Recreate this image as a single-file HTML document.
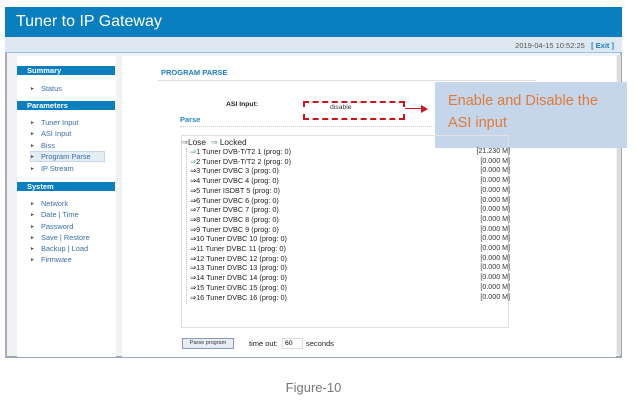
<!DOCTYPE html>
<html><head><meta charset="utf-8"><style>
*{margin:0;padding:0;box-sizing:border-box}
body{width:637px;height:401px;background:#fff;font-family:"Liberation Sans",sans-serif;position:relative;overflow:hidden}
.a{position:absolute}
.hd{left:5px;top:7px;width:617px;height:30px;background:#0a7fc0;color:#fff;font-size:16px;padding:6px 0 0 11px}
.tb{left:5px;top:37px;width:617px;height:16px;background:#dde8f2;border-bottom:1px solid #9cc3e0;font-size:7.5px;color:#555;text-align:right;padding:4px 8px 0 0}
.tb b{color:#1a7cc0}
.ct{left:5px;top:53px;width:617px;height:305px;background:#f0f2f4;border-bottom:2px solid #9aa8b8;border-left:2px solid #aab;border-right:2px solid #9aa}
.sb{left:17px;top:56px;width:99px;height:301px;background:#fff}
.sh{left:17px;width:98px;height:9px;background:#0a7fc0;color:#fff;font-size:7.5px;font-weight:bold;padding:0 0 0 10px;line-height:9px}
.it{left:30px;font-size:7.4px;color:#3a6ea8;line-height:9px}
.it:before{content:"►";color:#555;font-size:5px;margin-right:6px;vertical-align:1px}
.mn{left:122px;top:56px;width:494px;height:301px;background:#fff}
.r{left:190px;font-size:7.3px;color:#222;line-height:9.7px;white-space:nowrap}
.r i{font-style:normal;color:#5a8}
.v{left:460px;width:50px;text-align:right;font-size:7.1px;color:#333}
</style></head><body>
<div class="a hd">Tuner to IP Gateway</div>
<div class="a tb">2019-04-15 10:52:25 &nbsp;&nbsp;<b>[ Exit ]</b></div>
<div class="a ct"></div>
<div class="a" style="left:617px;top:55px;width:4px;height:300px;background:#ddd"></div>
<div class="a sb"></div>
<div class="a sh" style="top:66px">Summary</div>
<div class="a it" style="top:84px">Status</div>
<div class="a sh" style="top:101px">Parameters</div>
<div class="a it" style="top:118px">Tuner Input</div>
<div class="a it" style="top:129px">ASI Input</div>
<div class="a it" style="top:141px">Biss</div>
<div class="a" style="left:30px;top:151px;width:75px;height:11px;background:#e4ecf6;border:1px solid #c8d6e8"></div>
<div class="a it" style="top:152px">Program Parse</div>
<div class="a it" style="top:164px">IP Stream</div>
<div class="a sh" style="top:182px">System</div>
<div class="a it" style="top:199px">Network</div>
<div class="a it" style="top:210px">Date | Time</div>
<div class="a it" style="top:222px">Password</div>
<div class="a it" style="top:233px">Save | Restore</div>
<div class="a it" style="top:244px">Backup | Load</div>
<div class="a it" style="top:255px">Firmware</div>
<div class="a mn"></div>
<div class="a" style="left:161px;top:68px;font-size:7.5px;font-weight:bold;color:#1a7cc0">PROGRAM PARSE</div>
<div class="a" style="left:158px;top:80px;width:378px;height:1px;background:#ddd"></div>
<div class="a" style="left:226px;top:101px;font-size:6.8px;font-weight:bold;color:#222">ASI Input:</div>
<div class="a" style="left:303px;top:101px;width:102px;height:19px;border:2px dashed #d0121b"></div>
<div class="a" style="left:330px;top:104px;font-size:6.8px;color:#333">disable</div>
<div class="a" style="left:405px;top:108px;width:17px;height:1px;background:#d0121b"></div>
<div class="a" style="left:421px;top:105px;width:0;height:0;border-left:7px solid #d0121b;border-top:4px solid transparent;border-bottom:4px solid transparent"></div>
<div class="a" style="left:435px;top:82px;width:192px;height:66px;background:#c5d6ea;color:#e07a3a;font-size:14.5px;line-height:22px;padding:8px 0 0 13px;white-space:nowrap">Enable and Disable the<br>ASI input</div>
<div class="a" style="left:180px;top:115px;font-size:7.5px;font-weight:bold;color:#2a8ad0">Parse</div>
<div class="a" style="left:180px;top:126px;width:254px;border-top:1px dotted #ccc"></div>
<div class="a" style="left:181px;top:135px;width:328px;height:193px;border:1px solid #e0e0e0"></div>
<div class="a" style="left:181px;top:137px;font-size:8.3px;color:#222"><span style="color:#888">⇒</span>Lose &nbsp;<span style="color:#8a8">⇒</span> Locked</div>
<div class="a" style="left:186px;top:148px;width:1px;height:156px;border-left:1px dotted #bbb"></div>
<div class="a r" style="top:147px"><i>⇒</i>1 Tuner DVB-T/T2 1 (prog: 0)<br><i>⇒</i>2 Tuner DVB-T/T2 2 (prog: 0)<br>⇒3 Tuner DVBC 3 (prog: 0)<br>⇒4 Tuner DVBC 4 (prog: 0)<br>⇒5 Tuner ISDBT 5 (prog: 0)<br>⇒6 Tuner DVBC 6 (prog: 0)<br>⇒7 Tuner DVBC 7 (prog: 0)<br>⇒8 Tuner DVBC 8 (prog: 0)<br>⇒9 Tuner DVBC 9 (prog: 0)<br>⇒10 Tuner DVBC 10 (prog: 0)<br>⇒11 Tuner DVBC 11 (prog: 0)<br>⇒12 Tuner DVBC 12 (prog: 0)<br>⇒13 Tuner DVBC 13 (prog: 0)<br>⇒14 Tuner DVBC 14 (prog: 0)<br>⇒15 Tuner DVBC 15 (prog: 0)<br>⇒16 Tuner DVBC 16 (prog: 0)</div>
<div class="a v" style="top:147px;line-height:9.7px">[21.230 M]<br>[0.000 M]<br>[0.000 M]<br>[0.000 M]<br>[0.000 M]<br>[0.000 M]<br>[0.000 M]<br>[0.000 M]<br>[0.000 M]<br>[0.000 M]<br>[0.000 M]<br>[0.000 M]<br>[0.000 M]<br>[0.000 M]<br>[0.000 M]<br>[0.000 M]</div>
<div class="a" style="left:182px;top:338px;width:52px;height:11px;background:#e8ecf4;border:1px solid #8a9ab8;font-size:5.5px;color:#333;text-align:center;line-height:9px">Parse program</div>
<div class="a" style="left:249px;top:339px;font-size:7.5px;color:#222">time out:</div>
<div class="a" style="left:282px;top:338px;width:21px;height:11px;border:1px solid #ddd;font-size:6.8px;padding:1px 0 0 2px">60</div>
<div class="a" style="left:306px;top:339px;font-size:7.5px;color:#222">seconds</div>
<div class="a" style="left:0;top:380px;width:627px;text-align:center;font-size:13px;color:#777">Figure-10</div>
</body></html>
